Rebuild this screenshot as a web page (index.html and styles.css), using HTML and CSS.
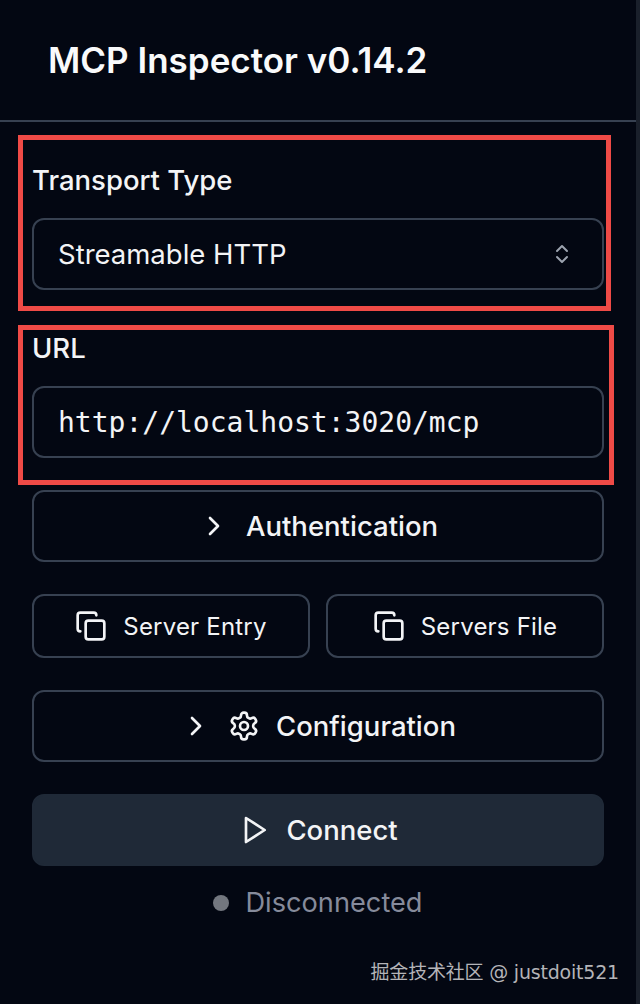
FILE: index.html
```html
<!DOCTYPE html>
<html lang="en">
<head>
  <meta charset="UTF-8">
  <meta name="viewport" content="width=device-width, initial-scale=1.0">
  <title>MCP Inspector</title>
  <link rel="stylesheet" href="styles.css">
</head>
<body>
  <aside class="sidebar">
    <header class="sidebar-header">
      <h1>MCP Inspector v0.14.2</h1>
    </header>

    <div class="sidebar-body">
      <div class="field field-transport">
        <label class="field-label">Transport Type</label>
        <div class="control">
          <span>Streamable HTTP</span>
          <svg class="icon icon-updown" viewBox="0 0 24 24"><path d="m7 15 5 5 5-5"/><path d="m7 9 5-5 5 5"/></svg>
        </div>
      </div>

      <div class="field field-url">
        <label class="field-label">URL</label>
        <div class="control control-mono">http://localhost:3020/mcp</div>
      </div>

      <button class="btn btn-outline">
        <svg class="icon" viewBox="0 0 24 24"><path d="m9 18 6-6-6-6"/></svg>
        Authentication
      </button>

      <div class="btn-row">
        <button class="btn btn-outline btn-small">
          <svg class="icon" viewBox="0 0 24 24"><rect x="8" y="8" width="14" height="14" rx="2" ry="2"/><path d="M4 16c-1.1 0-2-.9-2-2V4c0-1.1.9-2 2-2h10c1.1 0 2 .9 2 2"/></svg>
          Server Entry
        </button>
        <button class="btn btn-outline btn-small">
          <svg class="icon" viewBox="0 0 24 24"><rect x="8" y="8" width="14" height="14" rx="2" ry="2"/><path d="M4 16c-1.1 0-2-.9-2-2V4c0-1.1.9-2 2-2h10c1.1 0 2 .9 2 2"/></svg>
          Servers File
        </button>
      </div>

      <button class="btn btn-outline">
        <svg class="icon" viewBox="0 0 24 24"><path d="m9 18 6-6-6-6"/></svg>
        <svg class="icon" viewBox="0 0 24 24"><path d="M12.22 2h-.44a2 2 0 0 0-2 2v.18a2 2 0 0 1-1 1.73l-.43.25a2 2 0 0 1-2 0l-.15-.08a2 2 0 0 0-2.73.73l-.22.38a2 2 0 0 0 .73 2.73l.15.1a2 2 0 0 1 1 1.72v.51a2 2 0 0 1-1 1.74l-.15.09a2 2 0 0 0-.73 2.73l.22.38a2 2 0 0 0 2.73.73l.15-.08a2 2 0 0 1 2 0l.43.25a2 2 0 0 1 1 1.73V20a2 2 0 0 0 2 2h.44a2 2 0 0 0 2-2v-.18a2 2 0 0 1 1-1.73l.43-.25a2 2 0 0 1 2 0l.15.08a2 2 0 0 0 2.73-.73l.22-.39a2 2 0 0 0-.73-2.73l-.15-.08a2 2 0 0 1-1-1.74v-.5a2 2 0 0 1 1-1.74l.15-.09a2 2 0 0 0 .73-2.73l-.22-.38a2 2 0 0 0-2.73-.73l-.15.08a2 2 0 0 1-2 0l-.43-.25a2 2 0 0 1-1-1.73V4a2 2 0 0 0-2-2z"/><circle cx="12" cy="12" r="3"/></svg>
        Configuration
      </button>

      <button class="btn btn-primary">
        <svg class="icon" viewBox="0 0 24 24"><polygon points="6 3 20 12 6 21 6 3"/></svg>
        Connect
      </button>

      <div class="status">
        <span class="status-dot"></span>
        Disconnected
      </div>
    </div>

    <div class="watermark">掘金技术社区 @ justdoit521</div>
  </aside>
</body>
</html>
```

FILE: styles.css
```css
* {
  box-sizing: border-box;
}
html, body {
  height: 100%;
}
body {
  margin: 0;
  font-family: Inter, "Noto Sans CJK SC", sans-serif;
  color: #f3f4f6;
  background-color: #030712;
}
.sidebar {
  position: relative;
  height: 100%;
  border-right: 4px solid #1a202b;
}
.sidebar-header {
  height: 122px;
  padding-left: 48px;
  display: flex;
  align-items: center;
  border-bottom: 2px solid #374151;
}
h1 {
  margin: 0;
  font-size: 35px;
  font-weight: 600;
  color: #f9fafb;
}
.sidebar-body {
  padding: 44px 32px 0;
  display: flex;
  flex-direction: column;
  gap: 32px;
}
.field {
  position: relative;
  display: flex;
  flex-direction: column;
  gap: 24px;
}
.field-url {
  margin-top: 12px;
}
/* red annotation boxes drawn on top of the screenshot */
.field::after {
  content: "";
  position: absolute;
  border: 5px solid #ef4a46;
  pointer-events: none;
}
.field-transport::after {
  top: -31px;
  left: -14px;
  right: -7px;
  bottom: -21px;
}
.field-url::after {
  top: -9px;
  left: -14px;
  right: -10px;
  bottom: -27px;
}
.field-label {
  font-size: 27.5px;
  line-height: 28px;
  font-weight: 500;
}
.control {
  height: 72px;
  padding: 0 24px;
  display: flex;
  align-items: center;
  justify-content: space-between;
  font-size: 27.5px;
  border: 2px solid #374151;
  border-radius: 12px;
}
.control-mono {
  font-family: "DejaVu Sans Mono", monospace;
  font-size: 28px;
}
.icon {
  width: 32px;
  height: 32px;
  flex: none;
  fill: none;
  stroke: currentColor;
  stroke-width: 2;
  stroke-linecap: round;
  stroke-linejoin: round;
}
.icon-updown {
  width: 24px;
  height: 24px;
  margin-right: 4px;
  color: #9ca3af;
}
.btn {
  height: 72px;
  display: flex;
  align-items: center;
  justify-content: center;
  gap: 16px;
  padding: 0;
  font-family: inherit;
  font-size: 27.5px;
  font-weight: 500;
  color: #f3f4f6;
  background: none;
  border: 2px solid #374151;
  border-radius: 12px;
}
.btn-row {
  display: flex;
  gap: 16px;
}
.btn-small {
  flex: 1;
  height: 64px;
  font-size: 24px;
  font-weight: 400;
  letter-spacing: 0.2px;
}
.btn-primary {
  background-color: #1f2937;
  border-color: #1f2937;
}
.status {
  margin-top: -12px;
  display: flex;
  align-items: center;
  justify-content: center;
  gap: 16px;
  font-size: 27.2px;
  color: #868b9b;
}
.status-dot {
  width: 16px;
  height: 16px;
  border-radius: 50%;
  background-color: #73777f;
}
.watermark {
  position: absolute;
  right: 17px;
  bottom: 20px;
  font-family: "DejaVu Sans", "Noto Sans CJK SC", sans-serif;
  font-size: 19px;
  letter-spacing: -0.2px;
  color: #b4b4b8;
}
```
